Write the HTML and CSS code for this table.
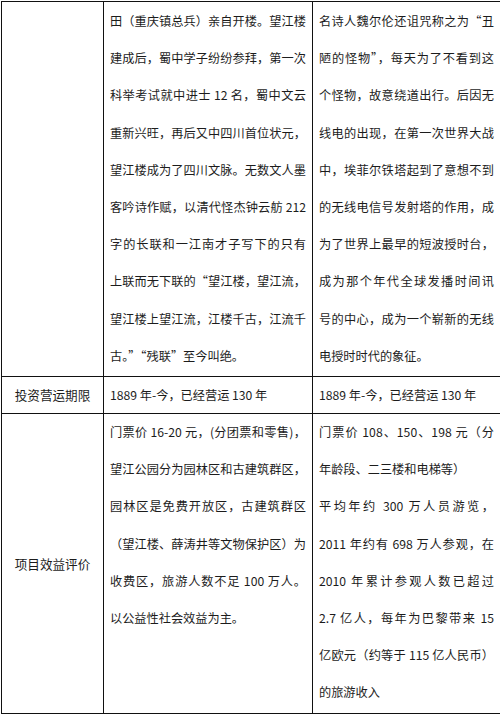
FILE: index.html
```html
<!DOCTYPE html>
<html lang="zh-CN">
<head>
<meta charset="utf-8">
<title>对比表</title>
<link rel="stylesheet" href="styles.css">
</head>
<body>
<table class="cmp">
  <colgroup>
    <col class="c1">
    <col class="c2">
    <col class="c3">
  </colgroup>
  <tbody>
    <tr class="r1">
      <td class="label"></td>
      <td class="txt">
        <span class="ln">田（重庆镇总兵）亲自开楼。望江楼</span>
        <span class="ln">建成后，蜀中学子纷纷参拜，第一次</span>
        <span class="ln">科举考试就中进士 12 名，蜀中文云</span>
        <span class="ln">重新兴旺，再后又中四川首位状元，</span>
        <span class="ln">望江楼成为了四川文脉。无数文人墨</span>
        <span class="ln">客吟诗作赋，以清代怪杰钟云舫 212</span>
        <span class="ln">字的长联和一江南才子写下的只有</span>
        <span class="ln">上联而无下联的“望江楼，望江流，</span>
        <span class="ln">望江楼上望江流，江楼千古，江流千</span>
        <span class="ln end">古。”“残联”至今叫绝。</span>
      </td>
      <td class="txt">
        <span class="ln">名诗人魏尔伦还诅咒称之为“丑</span>
        <span class="ln">陋的怪物”，每天为了不看到这</span>
        <span class="ln">个怪物，故意绕道出行。后因无</span>
        <span class="ln">线电的出现，在第一次世界大战</span>
        <span class="ln">中，埃菲尔铁塔起到了意想不到</span>
        <span class="ln">的无线电信号发射塔的作用，成</span>
        <span class="ln">为了世界上最早的短波授时台，</span>
        <span class="ln">成为那个年代全球发播时间讯</span>
        <span class="ln">号的中心，成为一个崭新的无线</span>
        <span class="ln end">电授时时代的象征。</span>
      </td>
    </tr>
    <tr class="r2">
      <td class="label">投资营运期限</td>
      <td class="txt"><span class="ln end">1889 年-今，已经营运 130 年</span></td>
      <td class="txt"><span class="ln end">1889 年-今，已经营运 130 年</span></td>
    </tr>
    <tr class="r3">
      <td class="label">项目效益评价</td>
      <td class="txt">
        <span class="ln">门票价 16-20 元，(分团票和零售)，</span>
        <span class="ln">望江公园分为园林区和古建筑群区，</span>
        <span class="ln">园林区是免费开放区，古建筑群区</span>
        <span class="ln">（望江楼、薛涛井等文物保护区）为</span>
        <span class="ln">收费区，旅游人数不足 100 万人。</span>
        <span class="ln end">以公益性社会效益为主。</span>
      </td>
      <td class="txt">
        <span class="ln">门票价 108、150、198 元（分</span>
        <span class="ln end">年龄段、二三楼和电梯等）</span>
        <span class="ln">平均年约 300 万人员游览，</span>
        <span class="ln">2011 年约有 698 万人参观，在</span>
        <span class="ln">2010 年累计参观人数已超过</span>
        <span class="ln">2.7 亿人，每年为巴黎带来 15</span>
        <span class="ln">亿欧元（约等于 115 亿人民币）</span>
        <span class="ln end">的旅游收入</span>
      </td>
    </tr>
  </tbody>
</table>
</body>
</html>
```
FILE: styles.css
```css
html, body {
  margin: 0;
  padding: 0;
  background: #ffffff;
}

body {
  padding: 1px 0 0 1px;
  font-family: "Noto Sans CJK SC", "Noto Sans", sans-serif;
  font-size: 12.2px;
  color: #1c1c1c;
}

.cmp {
  border-collapse: collapse;
  table-layout: fixed;
  width: 499px;
}

.c1 { width: 102px; }
.c2 { width: 209px; }
.c3 { width: 188px; }

.cmp td {
  border: 1px solid #111;
  padding: 0 6px 0 6px;
  vertical-align: top;
  line-height: 37.2px;
}

.cmp td.label {
  text-align: center;
  vertical-align: middle;
  padding: 0;
  font-size: 12.6px;
}

.r1 td { padding-top: 1px; padding-bottom: 1px; }
.r2 td { line-height: 36px; }
.r3 td { padding-top: 0; padding-bottom: 1px; }

.ln {
  display: block;
  text-align: justify;
  text-align-last: justify;
}

.ln.end {
  text-align-last: left;
}
```
